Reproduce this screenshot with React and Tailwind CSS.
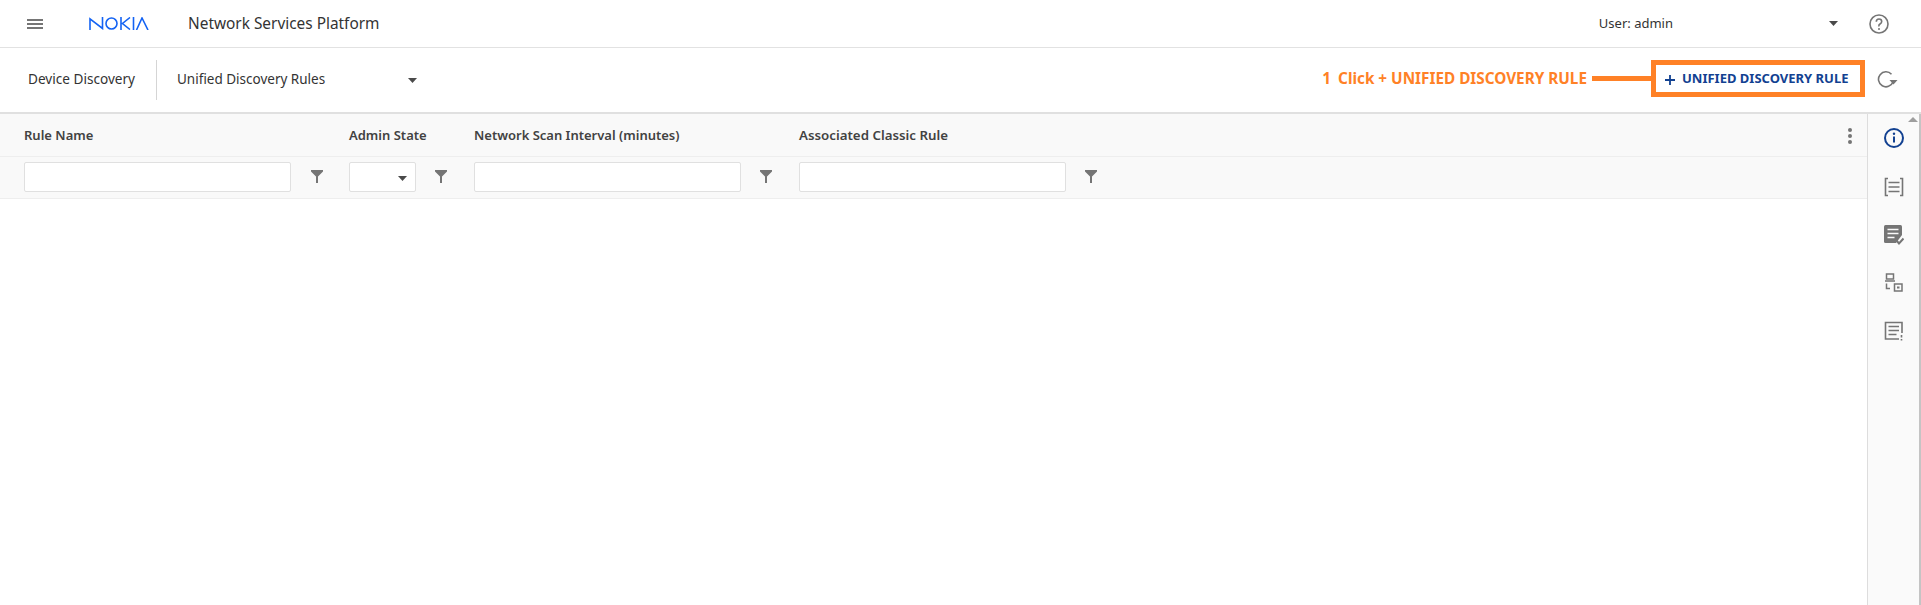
const font = { fontFamily: '"Noto Sans", sans-serif' };

function Caret({ className = "" }) {
  return (
    <svg width="9" height="5" viewBox="0 0 9 5" className={className}>
      <path d="M0 0h9L4.500 5z" fill="#4a4a4a" />
    </svg>
  );
}

function Funnel() {
  return (
    <svg width="12" height="13" viewBox="0 0 12 13">
      <path d="M0 0h12v1.500L7 6.500V13H5V6.500L0 1.500z" fill="#757575" />
    </svg>
  );
}

function NokiaLogo() {
  return (
    <svg width="60" height="13" viewBox="0 0 60 13" fill="none" stroke="#1463f3" strokeWidth="1.600">
      <path d="M1 13V1.800L13.500 11.500V0" />
      <circle cx="22.500" cy="6.500" r="5.500" />
      <path d="M32 0v13M41 0.500L33.500 6.500 41 12.500" />
      <path d="M44.500 0v13" />
      <path d="M47.500 13L53 1l6 12" />
    </svg>
  );
}

function FilterInput({ width }) {
  return <div className={`h-[30px] bg-white border border-[#e0e0e0] rounded-[2px] ${width}`} />;
}

function SideIcon({ children }) {
  return <div className="h-[48.500px] flex items-center justify-center">{children}</div>;
}

export default function App() {
  return (
    <div className="w-[1921px] h-[605px] overflow-hidden bg-white flex flex-col text-[#424242]" style={font}>
      {/* TOP BAR */}
      <div className="h-[48px] shrink-0 flex items-center border-b border-[#e2e2e2] pl-[27px]">
        <div className="w-[16px] flex flex-col gap-[2px]">
          <div className="h-[2px] bg-[#757575]" />
          <div className="h-[2px] bg-[#757575]" />
          <div className="h-[2px] bg-[#757575]" />
        </div>
        <div className="ml-[46px] flex items-center">
          <NokiaLogo />
        </div>
        <div className="ml-[39px] text-[15.400px] text-[#333]">Network Services Platform</div>
        <div className="ml-auto text-[13px] text-[#333]">User: admin</div>
        <Caret className="ml-[156px]" />
        <svg width="20" height="20" viewBox="0 0 20 20" fill="none" className="ml-[31px] mr-[32px]">
          <circle cx="10" cy="10" r="9" stroke="#757575" strokeWidth="1.600" />
          <path d="M7.300 7.800Q7.300 5 10 5t2.700 2.600Q12.700 9 11 10t-1 2.500" stroke="#757575" strokeWidth="1.600" />
          <circle cx="10" cy="15" r="1" fill="#757575" />
        </svg>
      </div>

      {/* TOOLBAR */}
      <div className="h-[66px] shrink-0 flex items-center border-b-2 border-[#e0e0e0] pl-[28px]">
        <div className="mb-[2px] text-[13.600px] text-[#333]">Device Discovery</div>
        <div className="ml-[21px] w-px h-[40px] bg-[#d5d5d5]" />
        <div className="ml-[20px] w-[240px] flex items-center justify-between">
          <span className="mb-[2px] text-[13.500px] text-[#333]">Unified Discovery Rules</span>
          <Caret />
        </div>

        <div className="ml-auto mb-[3px] flex items-center">
          <span className="text-[15.300px] font-bold text-[#ff8126]">1</span>
          <span className="ml-[7px] text-[15.300px] font-bold text-[#ff8126] whitespace-nowrap">Click + UNIFIED DISCOVERY RULE</span>
          <div className="ml-[5px] w-[59px] h-[5px] bg-[#ff8126]" />
          <div className="w-[214px] h-[37px] border-[5px] border-[#ff8126] flex items-center pl-[9px] text-[#124191]">
            <svg width="10" height="10" viewBox="0 0 10 10" className="mt-[2px]">
              <path d="M5 0v10M0 5h10" stroke="#124191" strokeWidth="1.800" />
            </svg>
            <span className="ml-[7px] text-[13px] font-bold whitespace-nowrap">UNIFIED DISCOVERY RULE</span>
          </div>
        </div>
        <svg width="21" height="18" viewBox="0 0 21 18" fill="none" className="ml-[12px] mr-[23px]">
          <path d="M14.500 3.200A7.500 7.500 0 1 0 16 11" stroke="#757575" strokeWidth="1.600" />
          <path d="M12.500 9h8l-4 4.500z" fill="#757575" />
        </svg>
      </div>

      {/* GRID + SIDE PANEL */}
      <div className="flex-1 flex min-h-0">
        <div className="flex-1 min-w-0 flex flex-col">
          <div className="h-[43px] shrink-0 bg-[#f9f9f9] border-b border-[#eeeeee] flex items-center pl-[24px] pt-[1px] text-[13px] font-semibold text-[#424242]">
            <div className="w-[325px]">Rule Name</div>
            <div className="w-[125px]">Admin State</div>
            <div className="w-[325px]">Network Scan Interval (minutes)</div>
            <div className="text-[13.300px]">Associated Classic Rule</div>
            <div className="ml-auto mr-[15px] w-[4px] flex flex-col gap-[2px]">
              <div className="h-[4px] rounded-full bg-[#757575]" />
              <div className="h-[4px] rounded-full bg-[#757575]" />
              <div className="h-[4px] rounded-full bg-[#757575]" />
            </div>
          </div>
          <div className="h-[42px] shrink-0 bg-[#f9f9f9] border-b border-[#eeeeee] flex items-center pl-[24px] pb-[2px]">
            <FilterInput width="w-[267px]" />
            <div className="ml-[20px] w-[38px]"><Funnel /></div>
            <div className="relative">
              <FilterInput width="w-[67px]" />
              <Caret className="absolute right-[9px] top-[14px]" />
            </div>
            <div className="ml-[19px] w-[39px]"><Funnel /></div>
            <FilterInput width="w-[267px]" />
            <div className="ml-[19px] w-[39px]"><Funnel /></div>
            <FilterInput width="w-[267px]" />
            <div className="ml-[19px]"><Funnel /></div>
          </div>
        </div>

        {/* SIDE ICONS */}
        <div className="w-[54px] shrink-0 flex relative border-l border-[#dddddd] bg-[#fafafa]">
          <div className="flex-1">
            <SideIcon>
              <svg width="22" height="22" viewBox="0 0 22 22" fill="none">
                <circle cx="11" cy="11" r="9" stroke="#124191" strokeWidth="2" />
                <path d="M11 9.500v6" stroke="#124191" strokeWidth="2" />
                <circle cx="11" cy="6.800" r="1.200" fill="#124191" />
              </svg>
            </SideIcon>
            <SideIcon>
              <svg width="20" height="20" viewBox="0 0 20 20" fill="none" stroke="#757575" strokeWidth="1.600">
                <path d="M4 1.500H1.500v17H4M16 1.500h2.500v17H16" />
                <path d="M4.500 5.500h11M4.500 10h11M4.500 14.500h11" />
              </svg>
            </SideIcon>
            <SideIcon>
              <svg width="20" height="21" viewBox="0 0 20 21">
                <path d="M1.500 0h15Q18 0 18 1.500V10l-6 8H1.500Q0 18 0 16.500v-15Q0 0 1.500 0z" fill="#757575" />
                <path d="M3.500 4.500h11M3.500 8.500h11M3.500 12.500h7" stroke="#fafafa" strokeWidth="1.600" />
                <path d="M12.500 15.500l2.500 3 4.500-5" fill="none" stroke="#757575" strokeWidth="2" />
              </svg>
            </SideIcon>
            <SideIcon>
              <svg width="19" height="19" viewBox="0 0 19 19" fill="none" stroke="#757575" strokeWidth="1.500" className="mb-[3px]">
                <rect x="2.500" y="1" width="7" height="5" />
                <path d="M1 8h10" />
                <path d="M2.500 10.500v5H6" />
                <rect x="10.500" y="11" width="7.500" height="7" />
                <rect x="13" y="13.500" width="2.500" height="2" fill="#757575" stroke="none" />
              </svg>
            </SideIcon>
            <SideIcon>
              <svg width="20" height="20" viewBox="0 0 20 20" fill="none" stroke="#757575" strokeWidth="1.600" className="mb-[2px]">
                <path d="M15 18H1.500V1.500h16.500V12" />
                <path d="M4.500 5.500h10.500M4.500 9.500h10.500M4.500 13.500h8" />
                <path d="M17.500 14v2.500M17.500 18v1.500" />
              </svg>
            </SideIcon>
          </div>
          <div className="w-[2px] bg-[#c4c4c4]" />
          <div className="absolute right-[3px] top-[3px] w-0 h-0 border-x-[5px] border-x-transparent border-b-[5px] border-b-[#9e9e9e]" />
        </div>
      </div>
    </div>
  );
}
